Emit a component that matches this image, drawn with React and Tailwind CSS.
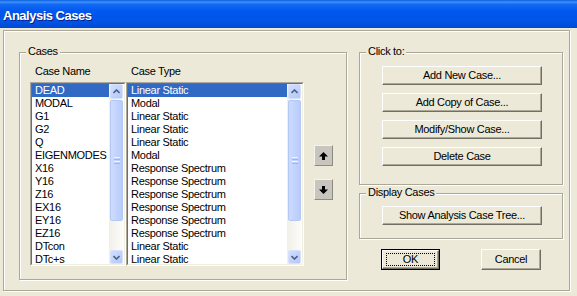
import React from 'react';

const CASES = [
  ['DEAD', 'Linear Static'],
  ['MODAL', 'Modal'],
  ['G1', 'Linear Static'],
  ['G2', 'Linear Static'],
  ['Q', 'Linear Static'],
  ['EIGENMODES', 'Modal'],
  ['X16', 'Response Spectrum'],
  ['Y16', 'Response Spectrum'],
  ['Z16', 'Response Spectrum'],
  ['EX16', 'Response Spectrum'],
  ['EY16', 'Response Spectrum'],
  ['EZ16', 'Response Spectrum'],
  ['DTcon', 'Linear Static'],
  ['DTc+s', 'Linear Static'],
];

// Luna-style scroll arrow
function ScrollArrow({ down, className }) {
  return (
    <div className={`mx-[1px] rounded-[2px] border border-[#d5e1fd] bg-[linear-gradient(135deg,#d2defd,#b3c8f8)] flex items-center justify-center ${className}`}>
      <svg width="7" height="5" viewBox="0 0 7 5">
        <polyline
          points={down ? '0.5,1 3.5,4 6.5,1' : '0.5,4 3.5,1 6.5,4'}
          fill="none"
          stroke="#4d6185"
          strokeWidth="1.6"
        />
      </svg>
    </div>
  );
}

function ScrollBar() {
  return (
    <div className="w-[15px] h-full shrink-0 flex flex-col bg-[linear-gradient(to_right,#f1efe8,#fdfdfb)]">
      <ScrollArrow className="h-[15px]" />
      <div className="mt-[1px] mx-[1px] h-[121px] rounded-[2px] border border-[#b4c8f6] bg-[linear-gradient(to_right,#cddbfd,#b8ccfa)] flex flex-col items-center justify-center gap-[1px]">
        <div className="w-[6px] h-[1px] bg-[#eef3fe]" />
        <div className="w-[6px] h-[1px] bg-[#9ab6f4]" />
        <div className="w-[6px] h-[1px] bg-[#eef3fe]" />
        <div className="w-[6px] h-[1px] bg-[#9ab6f4]" />
      </div>
      <div className="flex-1" />
      <ScrollArrow down className="h-[14px]" />
    </div>
  );
}

function ListBox({ items, className }) {
  return (
    <div className={`h-[184px] border border-t-[#aca899] border-l-[#aca899] border-b-white border-r-white ${className}`}>
      <div className="h-full border border-t-[#716f64] border-l-[#716f64] border-b-[#f1efe2] border-r-[#f1efe2] bg-white flex overflow-hidden">
        <div className="flex-1 min-w-0">
          {items.map((t, i) => (
            <div
              key={i}
              className={`h-[13px] leading-[13px] pl-[3px] whitespace-nowrap ${i === 0 ? 'bg-[#316ac5] text-white' : 'text-black'}`}
            >
              {t}
            </div>
          ))}
        </div>
        <ScrollBar />
      </div>
    </div>
  );
}

function GroupBox({ label, className, children }) {
  return (
    <div className={`relative border border-[#aca899] shadow-[inset_1px_1px_0_#fff,1px_1px_0_#fff] ${className}`}>
      <span className="absolute left-[6px] top-[-8px] px-[2px] leading-[13px] bg-[#ece9d8]">{label}</span>
      {children}
    </div>
  );
}

function WinButton({ children, className }) {
  return (
    <button
      type="button"
      className={`border border-t-white border-l-white border-b-[#716f64] border-r-[#716f64] bg-[#ece9d8] shadow-[inset_-1px_-1px_0_#aca899] flex items-center justify-center leading-[13px] ${className}`}
    >
      {children}
    </button>
  );
}

function MoveButton({ down }) {
  return (
    <button
      type="button"
      className="w-[19px] h-[21px] border border-t-[#f4f3ee] border-l-[#f4f3ee] border-b-[#8d8b82] border-r-[#8d8b82] bg-[#c7c5bd] flex items-center justify-center"
    >
      <svg width="9" height="8" viewBox="0 0 9 8">
        <polygon
          points={down ? '3,0 6,0 6,3.5 9,3.5 4.5,8 0,3.5 3,3.5' : '4.5,0 9,4.5 6,4.5 6,8 3,8 3,4.5 0,4.5'}
          fill="#000"
        />
      </svg>
    </button>
  );
}

export default function App() {
  return (
    <div className="w-[577px] h-[296px] bg-[#ece9d8] flex flex-col overflow-hidden font-['Liberation_Sans',Arial,sans-serif] text-[11px] tracking-[-0.3px] text-black">
      {/* Title bar */}
      <div className="h-[28px] shrink-0 flex items-center pl-[3px] pt-[3px] bg-[linear-gradient(to_bottom,#0b5ddc_0%,#3b92fc_7%,#1469f3_16%,#0058ee_40%,#0054e5_78%,#0048d3_100%)]">
        <span className="text-white font-bold text-[13px] tracking-[-0.5px] [text-shadow:1px_1px_0_#0a1e8c]">Analysis Cases</span>
      </div>

      {/* Body panel */}
      <div className="ml-[3px] mt-[2px] w-[567px] h-[261px] border border-[#aca899] shadow-[inset_1px_1px_0_#fff,1px_1px_0_#fff] flex pl-[15px] pt-[21px]">
        {/* Cases */}
        <GroupBox label="Cases" className="w-[328px] h-[228px] pl-[10px] pt-[12px]">
          <div className="flex h-[13px] leading-[13px] mb-[4px]">
            <div className="w-[96px] pl-[5px]">Case Name</div>
            <div className="pl-[5px]">Case Type</div>
          </div>
          <div className="flex">
            <ListBox items={CASES.map((c) => c[0])} className="w-[96px]" />
            <ListBox items={CASES.map((c) => c[1])} className="w-[178px]" />
            <div className="ml-[10px] pt-[63px] flex flex-col gap-[13px]">
              <MoveButton />
              <MoveButton down />
            </div>
          </div>
        </GroupBox>

        {/* Right column */}
        <div className="ml-[12px] w-[204px] flex flex-col">
          <GroupBox label="Click to:" className="h-[133px] pl-[22px] pt-[13px]">
            <div className="flex flex-col gap-[8px]">
              <WinButton className="w-[160px] h-[19px]">Add New Case...</WinButton>
              <WinButton className="w-[160px] h-[19px]">Add Copy of Case...</WinButton>
              <WinButton className="w-[160px] h-[19px]">Modify/Show Case...</WinButton>
              <WinButton className="w-[160px] h-[19px]">Delete Case</WinButton>
            </div>
          </GroupBox>

          <GroupBox label="Display Cases" className="mt-[8px] h-[46px] pl-[22px] pt-[12px]">
            <WinButton className="w-[160px] h-[19px]">Show Analysis Case Tree...</WinButton>
          </GroupBox>

          <div className="mt-[10px] ml-[22px] flex gap-[41px]">
            <button type="button" className="w-[59px] h-[21px] border border-black bg-[#ece9d8]">
              <div className="h-full border border-t-white border-l-white border-b-[#716f64] border-r-[#716f64] shadow-[inset_-1px_-1px_0_#aca899] px-[3px] py-[2px]">
                <div className="h-full border border-dotted border-black flex items-center justify-center leading-[13px]">OK</div>
              </div>
            </button>
            <WinButton className="w-[60px] h-[21px]">Cancel</WinButton>
          </div>
        </div>
      </div>
    </div>
  );
}
